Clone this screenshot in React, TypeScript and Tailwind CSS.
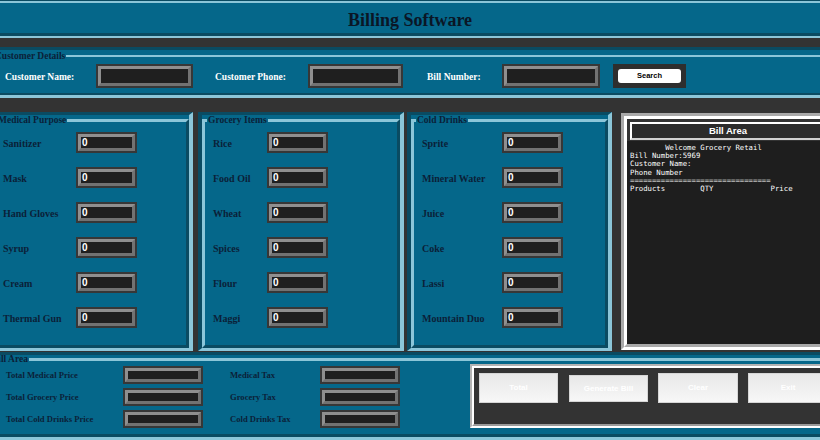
import React from "react";

const Entry = ({ size, value }: { size: string; value?: string }) => (
  <div className={`${size} shrink-0 border-2 border-[#373737] bg-[#373737]`}>
    <div className="h-full border-[3px] border-t-[#8f8f8f] border-l-[#8f8f8f] border-r-[#727272] border-b-[#727272] bg-[#1f1f1f] flex items-center pl-[1px]">
      {value && (
        <span className="text-white font-bold text-[10px] leading-none font-['Liberation_Sans',Arial,sans-serif]">
          {value}
        </span>
      )}
    </div>
  </div>
);

const ItemFrame = ({
  title,
  items,
  width,
  labelW,
  extra,
}: {
  title: string;
  items: string[];
  width: string;
  labelW: string;
  extra?: string;
}) => (
  <div
    className={`${width} ${extra ?? ""} h-full border-t-[3px] border-l-[4px] border-r-[4px] border-b-[3px] border-t-[#0a4b62] border-l-[#0a4b62] border-r-[#8bc6d9] border-b-[#8bc6d9] bg-[#05678a]`}
  >
    <fieldset className="h-full border-[3px] border-t-[#8bc6d9] border-l-[#8bc6d9] border-r-[#0a4b62] border-b-[#0a4b62]">
      <legend className="ml-[2px] px-[1px] text-[9.5px] leading-[11px] font-bold text-[#0b1f38]">{title}</legend>
      <div className="flex flex-col gap-[14px] pt-[6px] pl-[8px]">
        {items.map((it) => (
          <div key={it} className="flex items-center">
            <span className={`${labelW} text-[10px] font-bold text-[#0b1f38] pt-[1px]`}>{it}</span>
            <Entry size="w-[61px] h-[21px]" value="0" />
          </div>
        ))}
      </div>
    </fieldset>
  </div>
);

const billText = [
  "        Welcome Grocery Retail",
  "Bill Number:5969",
  "Customer Name:",
  "Phone Number",
  "================================",
  "Products        QTY             Price",
].join("\n");

const App = () => {
  return (
    <div className="w-[820px] h-[440px] overflow-hidden bg-[#333333] font-['Liberation_Serif','Times_New_Roman',serif]">
      <div className="w-[844px] -ml-[12px]">
        {/* title */}
        <div className="h-[38px] border-t-[1px] border-b-[2px] border-t-[#0a4b62] border-b-[#8bc6d9]">
          <div className="h-full border-t-[2px] border-b-[3px] border-t-[#8bc6d9] border-b-[#0a4b62] bg-[#05678a] flex items-center justify-center">
            <h1 className="text-[18px] font-bold text-[#0a1626] pt-[4px]">Billing Software</h1>
          </div>
        </div>

        {/* customer details */}
        <div className="mt-[9px] h-[51px] border-t-[3px] border-b-[3px] border-t-[#0a4b62] border-b-[#8bc6d9] bg-[#05678a]">
          <fieldset className="h-full border-t-2 border-b-2 border-t-[#8bc6d9] border-b-[#0a4b62]">
            <legend className="ml-[6px] px-[1px] text-[9.5px] leading-[12px] font-bold text-[#0b1f38]">Customer Details</legend>
            <div className="flex items-center pt-[2px] pl-[17px]">
              <span className="w-[91px] text-[9.5px] font-bold text-white pt-[2px]">Customer Name:</span>
              <Entry size="w-[97px] h-[24px]" />
              <span className="ml-[22px] w-[93px] text-[9.5px] font-bold text-white pt-[2px]">Customer Phone:</span>
              <Entry size="w-[95px] h-[24px]" />
              <span className="ml-[24px] w-[75px] text-[9.5px] font-bold text-white pt-[2px]">Bill Number:</span>
              <Entry size="w-[98px] h-[24px]" />
              <div className="ml-[13px] w-[73px] h-[24px] bg-[#2e2e2e] flex items-center justify-center">
                <button className="w-[63px] h-[14px] rounded-[3px] bg-white text-black font-bold text-[7.5px] leading-none font-['Liberation_Sans',Arial,sans-serif]">
                  Search
                </button>
              </div>
            </div>
          </fieldset>
        </div>

        {/* item frames + bill */}
        <div className="mt-[14px] h-[239px] flex">
          <ItemFrame
            title="Medical Purpose"
            width="w-[205px]"
            labelW="w-[73px]"
            items={["Sanitizer", "Mask", "Hand Gloves", "Syrup", "Cream", "Thermal Gun"]}
          />
          <ItemFrame
            title="Grocery Items"
            width="w-[206px]"
            labelW="w-[54px]"
            extra="ml-[5px]"
            items={["Rice", "Food Oil", "Wheat", "Spices", "Flour", "Maggi"]}
          />
          <ItemFrame
            title="Cold Drinks"
            width="w-[205px]"
            labelW="w-[80px]"
            extra="ml-[3px]"
            items={["Sprite", "Mineral Water", "Juice", "Coke", "Lassi", "Mountain Duo"]}
          />
          <div className="ml-[9px] w-[211px] my-[1px] border-[3px] border-t-[#a9a9a9] border-l-[#a9a9a9] border-r-white border-b-white">
            <div className="h-full border-[3px] border-t-white border-l-white border-r-[#a9a9a9] border-b-[#a9a9a9] bg-[#333333] flex flex-col">
              <div className="mt-[3px] ml-[3px] h-[18px] shrink-0 border-2 border-t-white border-l-white border-r-[#d0d0d0] border-b-[#d0d0d0] bg-[#2b2b2b] flex items-center justify-center text-white font-bold text-[9.5px] font-['Liberation_Sans',Arial,sans-serif]">
                Bill Area
              </div>
              <div className="mt-[1px] flex-1 bg-[#1e1e1e] px-[3px] pt-[3px] text-[7.3px] leading-[8.2px] text-white whitespace-pre font-['DejaVu_Sans_Mono',monospace]">
                {billText}
              </div>
            </div>
          </div>
        </div>

        {/* bottom totals */}
        <div className="mt-[1px] h-[88px] border-t-[3px] border-b-[3px] border-t-[#0a4b62] border-b-[#8bc6d9] bg-[#05678a]">
          <fieldset className="h-full border-t-[3px] border-b-[3px] border-t-[#8bc6d9] border-b-[#0a4b62]">
            <legend className="ml-[3px] px-[1px] text-[9.5px] leading-[8px] font-bold text-[#0b1f38]">Bill Area</legend>
            <div className="flex">
              <div className="pt-[3px] pl-[18px] grid grid-cols-[117px_80px_27px_90px_80px] gap-y-[4px] items-center text-[8.6px] font-bold text-[#0b1f38]">
                <span>Total Medical Price</span>
                <Entry size="w-[80px] h-[18px]" />
                <span />
                <span>Medical Tax</span>
                <Entry size="w-[80px] h-[18px]" />
                <span>Total Grocery Price</span>
                <Entry size="w-[80px] h-[18px]" />
                <span />
                <span>Grocery Tax</span>
                <Entry size="w-[80px] h-[18px]" />
                <span>Total Cold Drinks Price</span>
                <Entry size="w-[80px] h-[18px]" />
                <span />
                <span>Cold Drinks Tax</span>
                <Entry size="w-[80px] h-[18px]" />
              </div>
              <div className="ml-[70px] mt-[1px] h-[64px] flex-1 border-2 border-t-[#b3b3b3] border-l-[#b3b3b3] border-r-white border-b-white">
                <div className="h-full border-2 border-t-white border-l-white border-r-[#9a9a9a] border-b-[#9a9a9a] bg-[#333333] flex items-start gap-[10px] pl-[5px] pt-[5px] font-['Liberation_Sans',Arial,sans-serif]">
                  <button className="w-[79px] h-[30px] shrink-0 border border-[#d6d6d6] bg-linear-to-b from-[#e8e8e8] to-[#f7f7f7] text-white font-bold text-[8px]">
                    Total
                  </button>
                  <button className="ml-[1px] mt-[2px] w-[79px] h-[27px] shrink-0 border border-[#d6d6d6] bg-linear-to-b from-[#e8e8e8] to-[#f7f7f7] text-white font-bold text-[8px]">
                    Generate Bill
                  </button>
                  <button className="w-[80px] h-[30px] shrink-0 border border-[#d6d6d6] bg-linear-to-b from-[#e8e8e8] to-[#f7f7f7] text-white font-bold text-[8px]">
                    Clear
                  </button>
                  <button className="w-[80px] h-[30px] shrink-0 border border-[#d6d6d6] bg-linear-to-b from-[#e8e8e8] to-[#f7f7f7] text-white font-bold text-[8px]">
                    Exit
                  </button>
                </div>
              </div>
            </div>
          </fieldset>
        </div>
      </div>
    </div>
  );
};

export default App;
